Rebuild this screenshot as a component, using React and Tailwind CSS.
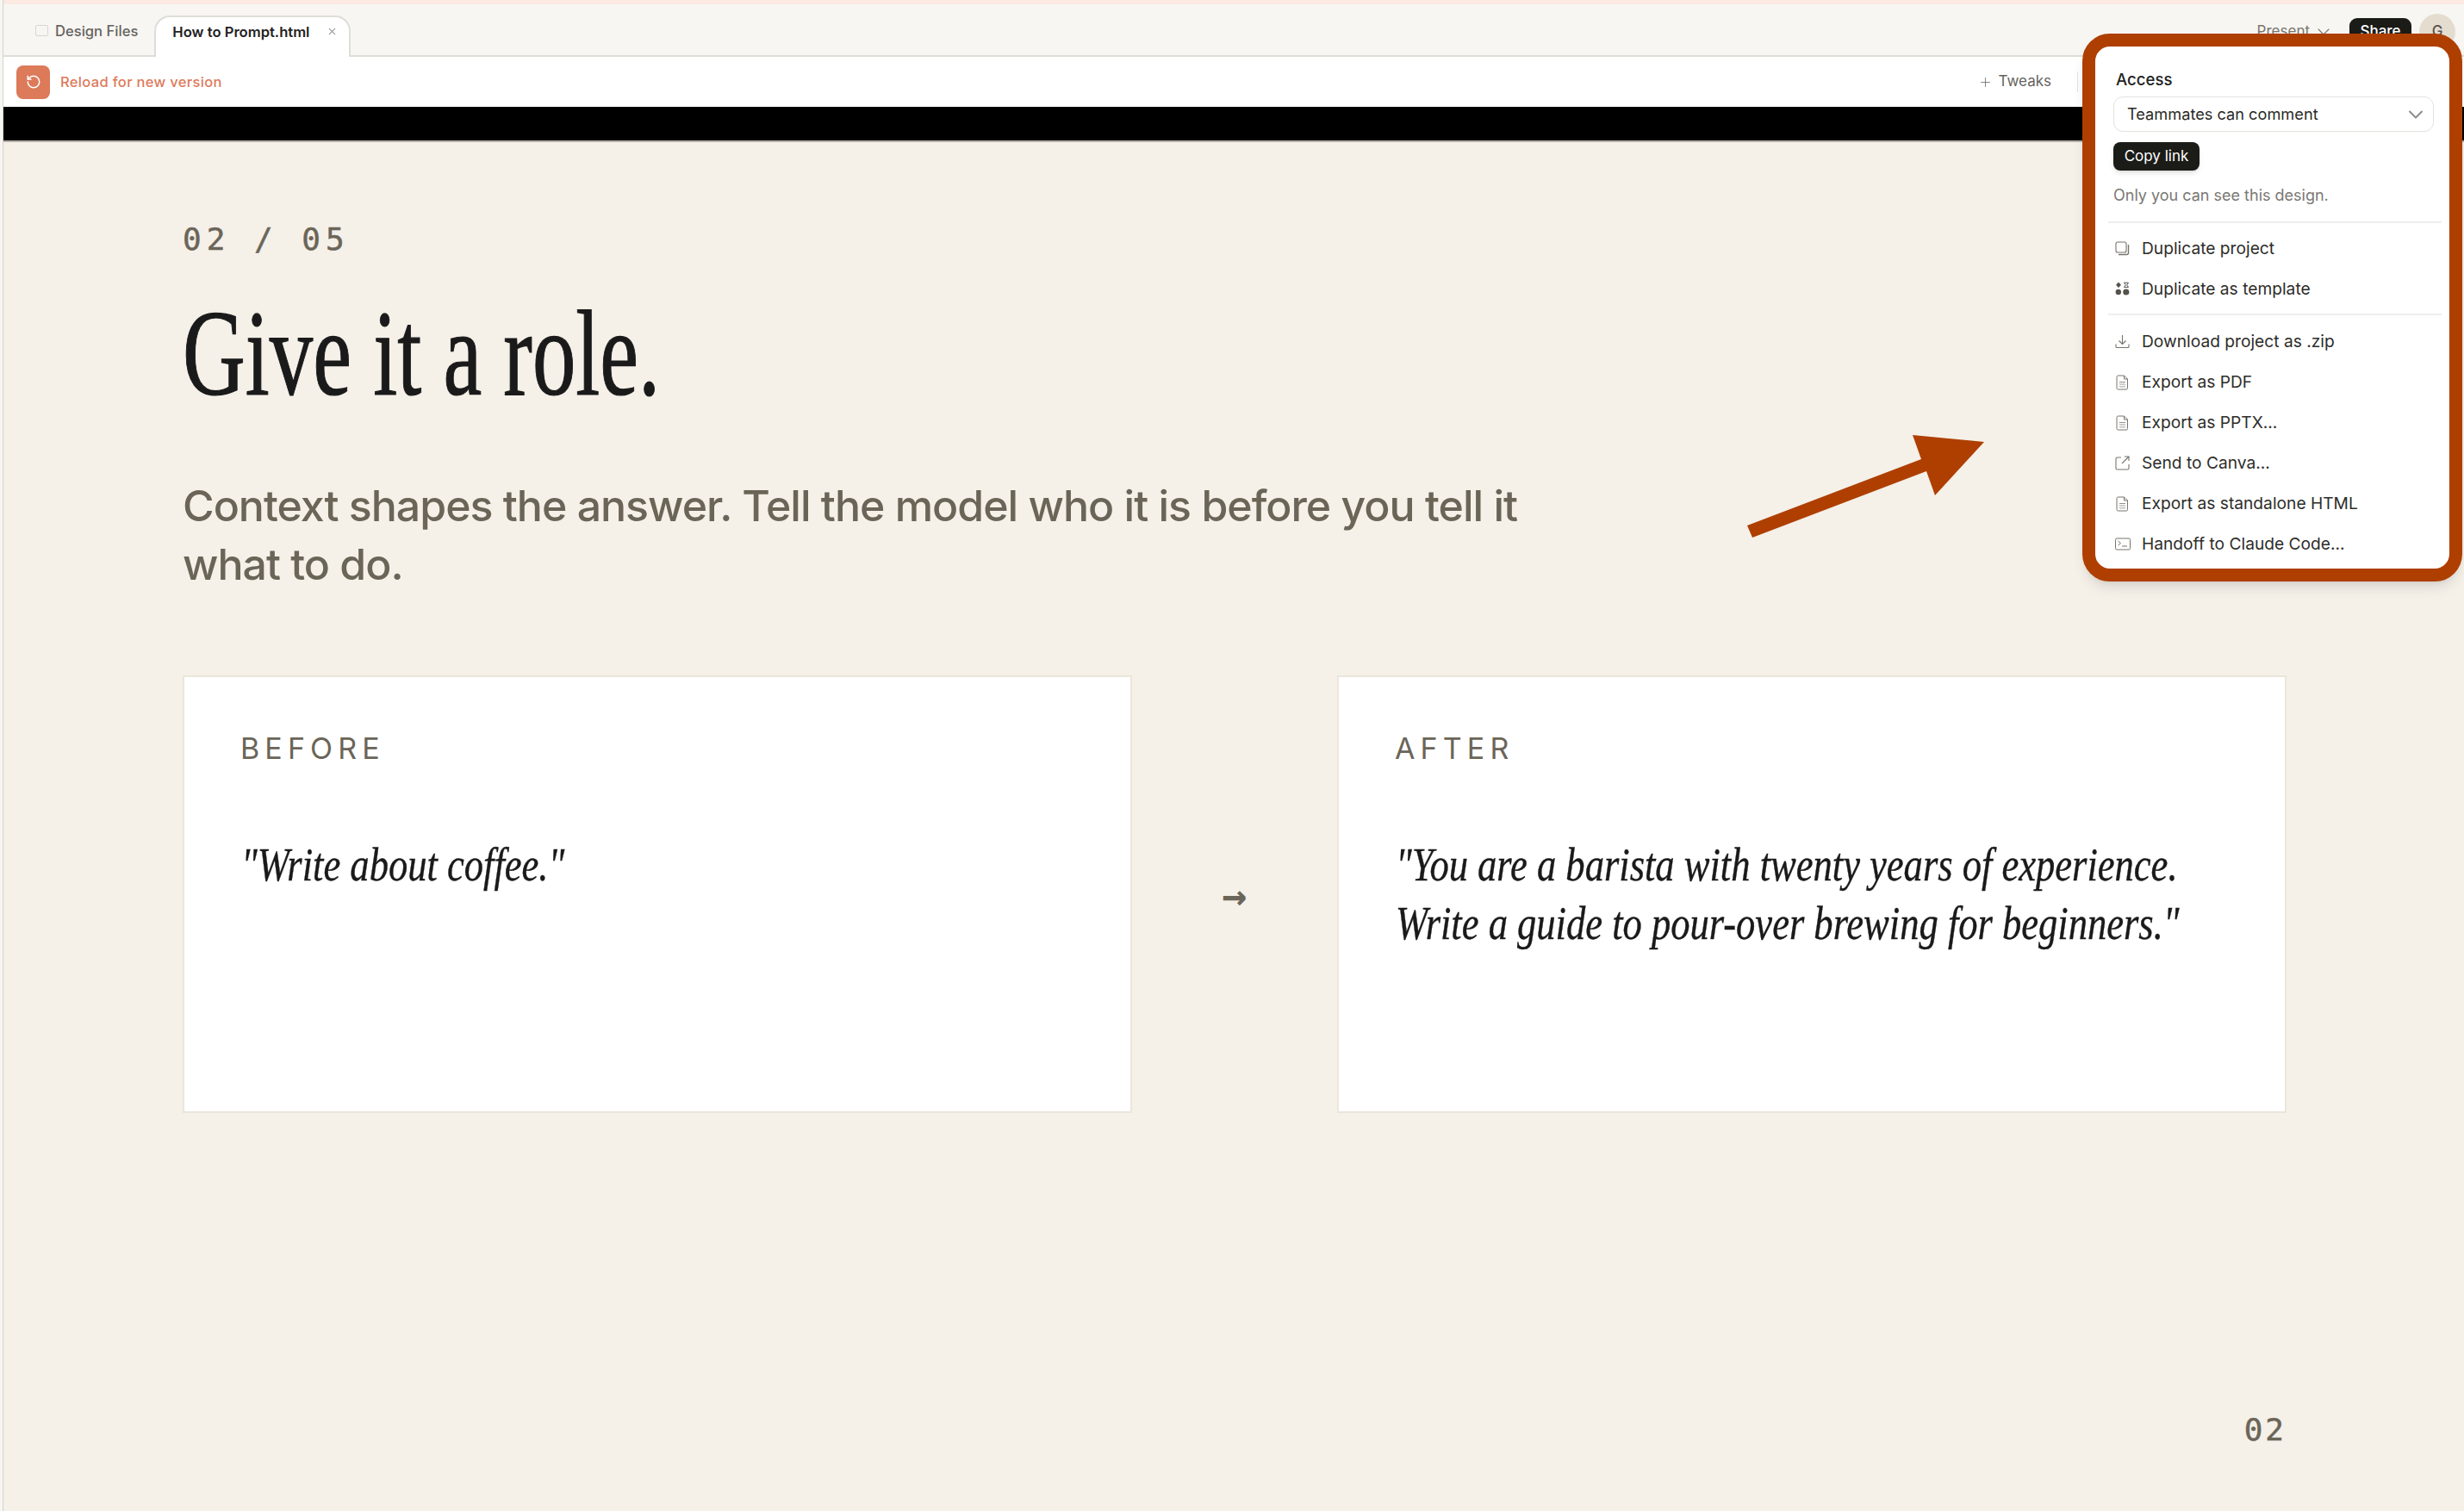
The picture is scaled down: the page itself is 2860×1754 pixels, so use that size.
import { ChevronDown, Plus, RotateCcw, X } from "lucide-react";

const SANS = "font-['Inter','Noto_Sans',sans-serif]";
const MONO = "font-['DejaVu_Sans_Mono',monospace]";
const SERIF = "font-['Liberation_Serif',serif]";

const CopyIcon = () => (
  <svg width="17" height="17" viewBox="0 0 17 17" fill="none" stroke="#77756f" strokeWidth="1.1">
    <rect x="1" y="1" width="12" height="12" rx="2" />
    <path d="M15.5 4v9.5a2 2 0 0 1-2 2H4" strokeWidth="1.4" />
  </svg>
);

const TemplateIcon = () => (
  <svg width="17" height="17" viewBox="0 0 17 17" fill="#55534e">
    <path d="M4 0.5l3 3.2-3 3.2-3-3.2z" />
    <path d="M10.5 1.2h5l-1.8 2.6 1.8 2.6h-5l1.8-2.6z" fill="none" stroke="#55534e" strokeWidth="1" />
    <circle cx="3.8" cy="12" r="3.2" />
    <circle cx="12.8" cy="12" r="3.6" />
  </svg>
);

const DownloadIcon = () => (
  <svg width="17" height="17" viewBox="0 0 17 17" fill="none" stroke="#77756f" strokeWidth="1.1">
    <path d="M8.5 1v10M4.5 7.5l4 4 4-4" />
    <path d="M1 11.5v3a1 1 0 0 0 1 1h13a1 1 0 0 0 1-1v-3" />
  </svg>
);

const FileIcon = () => (
  <svg width="17" height="18" viewBox="0 0 17 18" fill="none" stroke="#77756f" strokeWidth="1">
    <path d="M3.5 1h7l4 4v10.5a1.5 1.5 0 0 1-1.5 1.5H3.5A1.5 1.5 0 0 1 2 15.5v-13A1.5 1.5 0 0 1 3.5 1z" />
    <path d="M10.5 1v4h4" />
    <path d="M5 8.5h7M5 11c1-.8 1.5.8 2.3 0s1.5.8 2.4 0 1.4.8 2.3 0M5 13.8c1-.8 1.5.8 2.3 0s1.5.8 2.4 0 1.4.8 2.3 0" strokeWidth="0.8" />
  </svg>
);

const SendIcon = () => (
  <svg width="17" height="17" viewBox="0 0 17 17" fill="none" stroke="#77756f" strokeWidth="1.1">
    <path d="M7 2H2.5A1.5 1.5 0 0 0 1 3.5v11A1.5 1.5 0 0 0 2.5 16h12a1.5 1.5 0 0 0 1.5-1.5V10" />
    <path d="M8 9l7.5-7.5M11 1h5v5" />
  </svg>
);

const TerminalIcon = () => (
  <svg width="18" height="15" viewBox="0 0 18 15" fill="none" stroke="#77756f" strokeWidth="1">
    <rect x="0.5" y="1" width="17" height="13" rx="1.5" />
    <path d="M3.5 4l3 2.5-3 2.5M8 10h6" />
  </svg>
);

const topItems = [
  { label: "Duplicate project", icon: <CopyIcon /> },
  { label: "Duplicate as template", icon: <TemplateIcon /> },
];

const exportItems = [
  { label: "Download project as .zip", icon: <DownloadIcon /> },
  { label: "Export as PDF", icon: <FileIcon /> },
  { label: "Export as PPTX...", icon: <FileIcon /> },
  { label: "Send to Canva...", icon: <SendIcon /> },
  { label: "Export as standalone HTML", icon: <FileIcon /> },
  { label: "Handoff to Claude Code...", icon: <TerminalIcon /> },
];

const MenuRow = ({ item }) => (
  <div className="flex h-[47px] items-center">
    <span className="flex w-[33px] shrink-0 pl-[2px]">{item.icon}</span>
    <span className="text-[19.2px] text-[#2e2d2a]">{item.label}</span>
  </div>
);

const Compare = ({ title, lines }) => (
  <div className="h-[508px] w-[1102px] shrink-0 overflow-hidden border-2 border-[#ebe6da] bg-white px-[66px] pt-[58px]">
    <div className={`${SANS} -ml-[1px] text-[34px] leading-[50px] tracking-[0.18em] text-[#6b6558]`}>{title}</div>
    <div className={`${SERIF} mt-[76px] w-[1200px] origin-left scale-x-[0.825] whitespace-nowrap text-[54px] leading-[68px] text-[#1a1a1a] italic [-webkit-text-stroke:0.4px_#1a1a1a]`}>
      {lines.map((line) => (
        <div key={line}>{line}</div>
      ))}
    </div>
  </div>
);

export default function App() {
  return (
    <div className={`${SANS} relative h-[1754px] overflow-hidden bg-[#f8f6f2] pl-[3px]`}>
      <div className="flex h-full flex-col border-l border-[#d5d3cd] bg-[#f5f0e8]">
        <div className="h-[5px] bg-[#fbe9e2]" />
        <div className="flex h-[61px] items-end border-b-2 border-[#deddd8] bg-[#f8f6f2] pr-[10px]">
          <div className="flex h-[48px] items-start gap-[8px] pl-[37px] pr-[21px] pt-[8px] text-[16.6px] font-medium text-[#65635e]">
            <span className="mt-[5px] h-[13px] w-[15px] rounded-[2px] border border-[#d8d6d0]" />
            Design Files
          </div>
          <div className="-mb-[2px] flex h-[48px] w-[228px] -translate-x-[2px] items-start justify-between rounded-t-[18px] border-2 border-b-0 border-[#deddd8] bg-white pl-[19px] pr-[13px] pt-[5px] text-[16.6px] font-semibold text-[#222]">
            How to Prompt.html
            <X size={13} className="mt-[5px] text-[#a5a39e]" />
          </div>
          <div className="ml-auto flex items-center pb-[6px]">
            <span className="mr-[4px] text-[17px] text-[#77756f]">Present</span>
            <ChevronDown size={24} strokeWidth={1.1} className="mr-[18px] text-[#77756f]" />
            <div className="flex h-[32px] w-[72px] items-center justify-center rounded-[9px] bg-[#1b1b17] text-[17px] font-medium text-white">Share</div>
            <div className="ml-[9px] flex h-[42px] w-[42px] items-center justify-center rounded-full bg-[#e4dccf] text-[17px] font-medium text-[#55534e]">G</div>
          </div>
        </div>
        <div className="flex h-[58px] items-center bg-white pl-[15px] pr-[448px]">
          <div className="flex h-[39px] w-[39px] items-center justify-center rounded-[8px] bg-[#dc7a5a]">
            <RotateCcw size={18} strokeWidth={2} className="text-white" />
          </div>
          <span className="ml-[12px] text-[16.5px] font-medium tracking-[0.02em] text-[#dc7a5a]">Reload for new version</span>
          <div className="ml-auto flex items-center gap-[7px] text-[17px] text-[#65635e]">
            <Plus size={17} strokeWidth={1.1} />
            Tweaks
          </div>
          <div className="ml-[30px] h-[24px] w-px bg-[#e3e2de]" />
        </div>
        <div className="h-[41px] border-b-2 border-[#b5b0a6] bg-black" />

        <div className="flex flex-1 flex-col pl-[208px] pr-[203px] pt-[91px]">
          <div className={`${MONO} text-[36px] leading-[44px] tracking-[6px] text-[#6b6558] [-webkit-text-stroke:0.5px_#6b6558]`}>02 / 05</div>
          <h1 className={`${SERIF} mt-[35px] w-[1000px] origin-left scale-x-[0.71] text-[142px] leading-[150px] font-normal text-[#1a1a1a] [-webkit-text-stroke:1.2px_#1a1a1a]`}>Give it a role.</h1>
          <p className="mt-[68px] w-[1580px] text-[50px] leading-[68px] font-medium tracking-[-1px] text-[#6b6558]">
            Context shapes the answer. Tell the model who it is before you tell it what to do.
          </p>
          <div className="mt-[95px] flex items-center">
            <Compare title="BEFORE" lines={['"Write about coffee."']} />
            <div className={`${MONO} flex w-[238px] shrink-0 justify-center pt-[2px] text-[48px] font-bold text-[#6b6558]`}>→</div>
            <Compare title="AFTER" lines={['"You are a barista with twenty years of experience.', 'Write a guide to pour-over brewing for beginners."']} />
          </div>
          <div className={`${MONO} mr-[3px] mt-[346px] text-right text-[36px] leading-[44px] tracking-[3px] text-[#6b6558] [-webkit-text-stroke:0.5px_#6b6558]`}>02</div>
        </div>
      </div>

      {/* annotation over the page */}
      <svg className="absolute left-[2028px] top-[498px]" width="280" height="130" viewBox="0 0 280 130">
        <path d="M0 112L202 35 192 7 275 15 218 77 208 49 6 126z" fill="#ae3f00" />
      </svg>

      <div className="absolute left-[2417px] top-[39px] h-[636px] w-[441px] rounded-[32px] border-[15px] border-[#ae3f00] bg-white pl-[21px] pr-[18px] pt-[26px] shadow-lg">
        <div className="pl-[3px] text-[18.6px] leading-[24px] font-medium text-[#222]">Access</div>
        <div className="mt-[8px] flex h-[41px] items-center justify-between rounded-[11px] border border-[#e3e2de] pl-[15px] pr-[6px] text-[18.2px] text-[#2a2a27]">
          Teammates can comment
          <ChevronDown size={28} strokeWidth={1.6} className="text-[#8b8984]" />
        </div>
        <div className="mt-[12px] flex h-[33px] w-[100px] items-center justify-center rounded-[8px] bg-[#1b1b17] text-[17px] text-white shadow-md">Copy link</div>
        <div className="mt-[16px] text-[18px] leading-[26px] text-[#7a7873]">Only you can see this design.</div>
        <div className="-ml-[6px] -mr-[9px] mt-[17px] h-[2px] bg-[#eeeeec]" />
        <div className="pt-[6px]">
          {topItems.map((item) => (
            <MenuRow key={item.label} item={item} />
          ))}
        </div>
        <div className="-ml-[6px] -mr-[9px] mt-[5px] h-[2px] bg-[#eeeeec]" />
        <div className="pt-[7px]">
          {exportItems.map((item) => (
            <MenuRow key={item.label} item={item} />
          ))}
        </div>
      </div>
    </div>
  );
}
